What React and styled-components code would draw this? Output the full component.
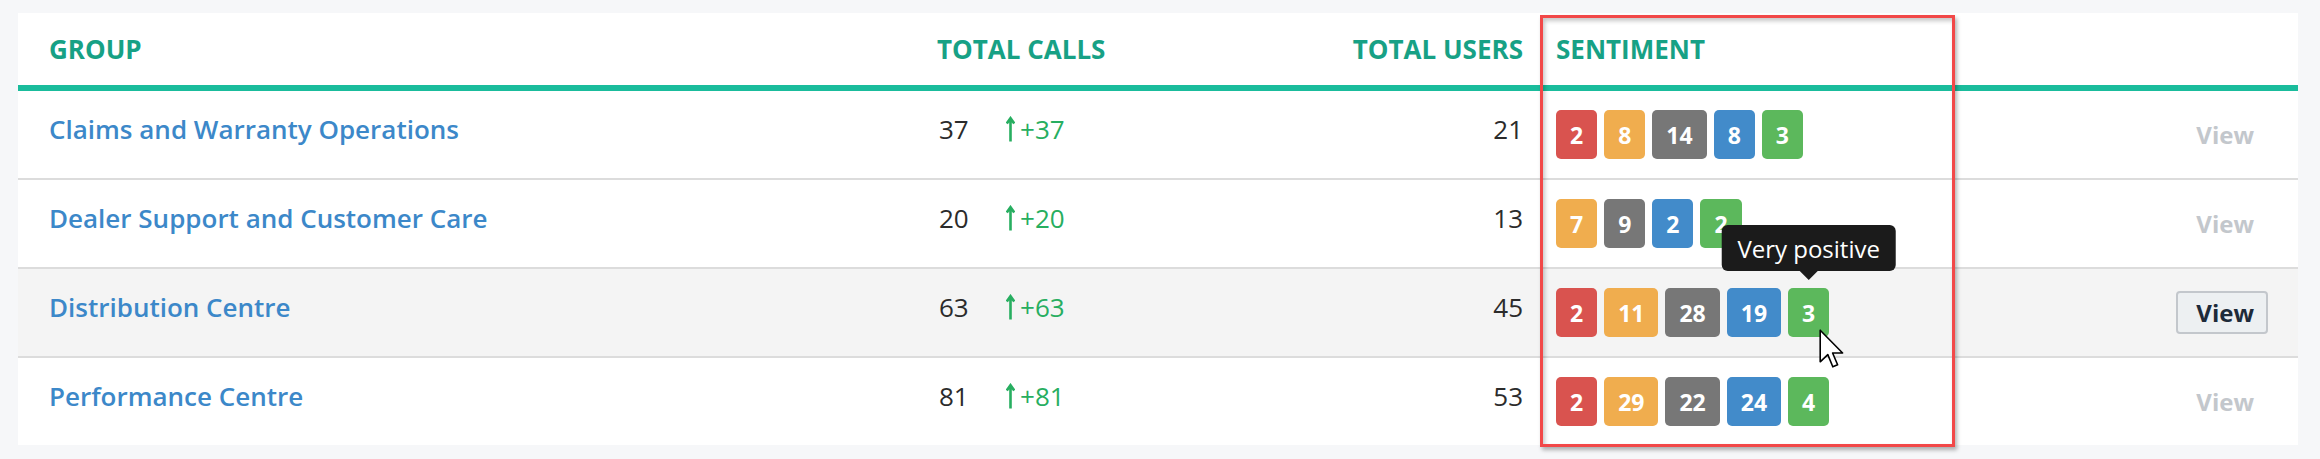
import styled, { createGlobalStyle } from "styled-components";

const GlobalStyle = createGlobalStyle`
  body {
    margin: 0;
    background: #f6f7f9;
    font-family: "Open Sans", "Noto Sans", sans-serif;
  }
`;

const COLUMNS = "890px 292px 341px 1fr 150px";

const Page = styled.div`
  padding: 13px 22px 16px 18px;
`;

const Card = styled.div`
  position: relative;
  background: #ffffff;
`;

const HeaderRow = styled.div`
  display: grid;
  grid-template-columns: ${COLUMNS};
  align-items: center;
  height: 72px;
  border-bottom: 6px solid #1abc9c;
`;

const HeaderCell = styled.div`
  font-size: 26px;
  font-weight: 700;
  color: #17a185;
  text-transform: uppercase;
  white-space: nowrap;
  padding-left: ${(p) => p.$padLeft || 0}px;
  padding-right: ${(p) => p.$padRight || 0}px;
  text-align: ${(p) => (p.$right ? "right" : "left")};
`;

const Row = styled.div`
  display: grid;
  grid-template-columns: ${COLUMNS};
  align-items: center;
  height: 87px;
  background: ${(p) => (p.$hover ? "#f4f4f4" : "#ffffff")};
  border-top: ${(p) => (p.$first ? "none" : "2px solid #dcdcdc")};
`;

const TextCell = styled.div`
  padding-left: ${(p) => p.$padLeft || 0}px;
  padding-right: ${(p) => p.$padRight || 0}px;
  padding-bottom: 12px;
  font-size: 26px;
  color: #2b2b2b;
  white-space: nowrap;
  display: flex;
  align-items: center;
  justify-content: ${(p) => (p.$right ? "flex-end" : "flex-start")};
`;

const GroupLink = styled.a`
  color: #3c88c9;
  font-weight: 600;
  text-decoration: none;
  cursor: pointer;
`;

const Count = styled.span`
  width: 67px;
`;

const Delta = styled.span`
  display: inline-flex;
  align-items: center;
  gap: 5px;
  color: #27ae60;
`;

const BadgeCell = styled.div`
  padding-left: 15px;
  display: flex;
  gap: 7px;
`;

const BADGE_COLORS = {
  veryNegative: "#d9534f",
  negative: "#f0ad4e",
  neutral: "#777777",
  positive: "#428bca",
  veryPositive: "#5cb85c",
};

const Badge = styled.span`
  position: relative;
  display: inline-flex;
  align-items: center;
  justify-content: center;
  height: 49px;
  padding: 0 14px;
  min-width: 13px;
  border-radius: 5px;
  background: ${(p) => BADGE_COLORS[p.$kind]};
  color: #ffffff;
  font-size: 23px;
  font-weight: 700;
`;

const Tooltip = styled.span`
  position: absolute;
  left: 50%;
  bottom: calc(100% + 17px);
  transform: translateX(-50%);
  z-index: 2;
  padding: 0 16px;
  height: 46px;
  display: flex;
  align-items: center;
  border-radius: 6px;
  background: #1b1b1b;
  color: #ffffff;
  font-size: 24px;
  font-weight: 400;
  white-space: nowrap;

  &::after {
    content: "";
    position: absolute;
    left: 50%;
    top: 100%;
    transform: translateX(-50%);
    border-left: 9px solid transparent;
    border-right: 9px solid transparent;
    border-top: 9px solid #1b1b1b;
  }
`;

const Pointer = styled.svg`
  position: absolute;
  left: 31px;
  top: 41px;
  z-index: 3;
`;

const ActionCell = styled.div`
  display: flex;
  justify-content: flex-end;
  padding-right: 30px;
`;

const ViewButton = styled.button`
  height: 43px;
  padding: 0 12px 0 18px;
  border-radius: 4px;
  border: 2px solid ${(p) => (p.$active ? "#c3c7cc" : "transparent")};
  background: ${(p) => (p.$active ? "#edf0f2" : "transparent")};
  color: ${(p) => (p.$active ? "#1e2b3a" : "#c3c7cc")};
  font-family: "Open Sans", sans-serif;
  font-size: 24px;
  font-weight: 700;
  cursor: pointer;
`;

const Highlight = styled.div`
  position: absolute;
  left: 1522px;
  top: 2px;
  width: 409px;
  height: 426px;
  border: 3.5px solid #f24848;
  box-shadow: 2px 3px 4px rgba(0, 0, 0, 0.3), inset 2px 3px 4px rgba(0, 0, 0, 0.22);
  pointer-events: none;
`;

const groups = [
  { name: "Claims and Warranty Operations", calls: 37, users: 21, sentiment: [2, 8, 14, 8, 3] },
  { name: "Dealer Support and Customer Care", calls: 20, users: 13, sentiment: [0, 7, 9, 2, 2] },
  { name: "Distribution Centre", calls: 63, users: 45, sentiment: [2, 11, 28, 19, 3], hover: true },
  { name: "Performance Centre", calls: 81, users: 53, sentiment: [2, 29, 22, 24, 4] },
];

const kinds = ["veryNegative", "negative", "neutral", "positive", "veryPositive"];

const UpArrow = () => (
  <svg width="9" height="26" viewBox="0 0 9 26">
    <path d="M4.5 25.5V3M0.8 7.5L4.5 2.2L8.2 7.5" fill="none" stroke="#27ae60" strokeWidth="2.6" />
  </svg>
);

const MouseCursor = () => (
  <Pointer width="26" height="40" viewBox="0 0 13 20">
    <path
      d="M0.6 0.6V16.4L4.4 12.8L6.9 18.9L9.3 17.9L6.8 12H11.8Z"
      fill="#ffffff"
      stroke="#000000"
      strokeWidth="0.8"
      strokeLinejoin="round"
    />
  </Pointer>
);

export default function App() {
  return (
    <Page>
      <GlobalStyle />
      <Card>
        <HeaderRow>
          <HeaderCell $padLeft={31}>Group</HeaderCell>
          <HeaderCell $padLeft={29}>Total Calls</HeaderCell>
          <HeaderCell $right $padRight={18}>Total Users</HeaderCell>
          <HeaderCell $padLeft={15}>Sentiment</HeaderCell>
          <HeaderCell />
        </HeaderRow>
        {groups.map((g, i) => (
          <Row key={g.name} $first={i === 0} $hover={g.hover}>
            <TextCell $padLeft={31}>
              <GroupLink>{g.name}</GroupLink>
            </TextCell>
            <TextCell $padLeft={31}>
              <Count>{g.calls}</Count>
              <Delta>
                <UpArrow />+{g.calls}
              </Delta>
            </TextCell>
            <TextCell $right $padRight={18}>
              {g.users}
            </TextCell>
            <BadgeCell>
              {g.sentiment.map((n, k) =>
                n > 0 ? (
                  <Badge key={k} $kind={kinds[k]}>
                    {n}
                    {g.hover && k === 4 && (
                      <>
                        <Tooltip>Very positive</Tooltip>
                        <MouseCursor />
                      </>
                    )}
                  </Badge>
                ) : null
              )}
            </BadgeCell>
            <ActionCell>
              <ViewButton $active={g.hover}>View</ViewButton>
            </ActionCell>
          </Row>
        ))}
        <Highlight />
      </Card>
    </Page>
  );
}
